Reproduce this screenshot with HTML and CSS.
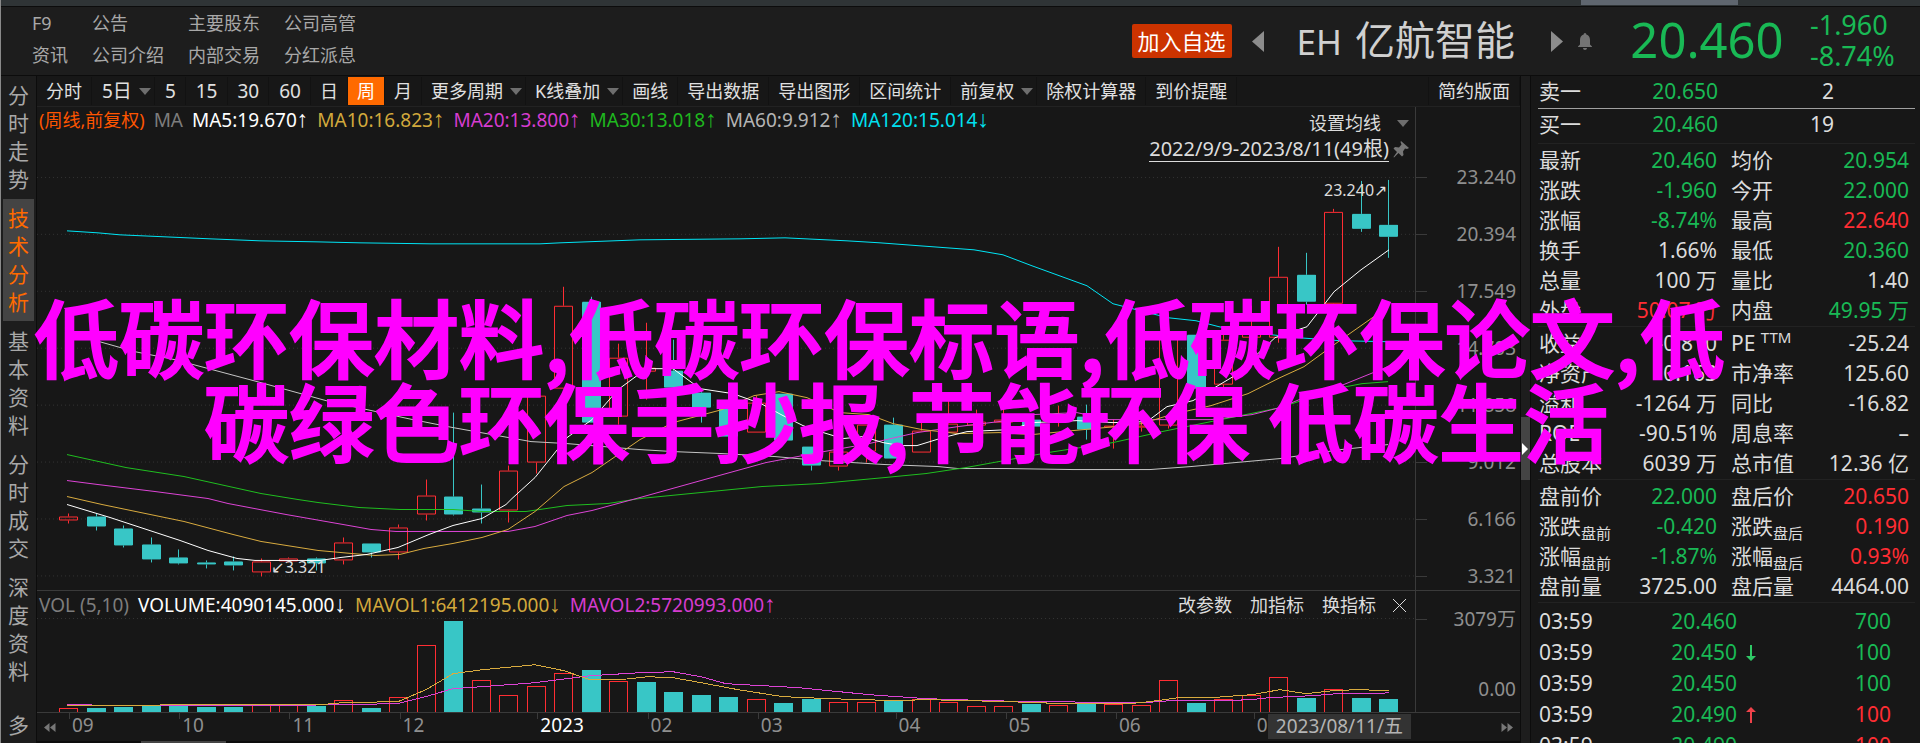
FILE: index.html
```html
<!DOCTYPE html>
<html lang="zh-CN">
<head>
    <meta charset="UTF-8">
    <meta name="viewport" content="width=device-width, initial-scale=1.0">
    <title>EH 亿航智能</title>
    <link rel="stylesheet" href="styles.css">
</head>
<body>
<div class="tab-strip"><span class="tab-current"></span></div>

<header class="header">
    <nav class="header-menu">
        <a href="#">F9</a><a href="#">公告</a><a href="#">主要股东</a><a href="#">公司高管</a>
        <a href="#">资讯</a><a href="#">公司介绍</a><a href="#">内部交易</a><a href="#">分红派息</a>
    </nav>
    <div class="stock">
        <button type="button" class="btn-add">加入自选</button>
        <button type="button" class="btn-icon" aria-label="上一只"><svg width="12" height="21" viewBox="0 0 12 21"><path d="M12 0v21L0 10.500z" fill="#8c8c8c"/></svg></button>
        <h1 class="stock-name"><span class="stock-code">EH</span>亿航智能</h1>
        <button type="button" class="btn-icon" aria-label="下一只"><svg width="12" height="21" viewBox="0 0 12 21"><path d="M0 0v21l12-10.500z" fill="#8c8c8c"/></svg></button>
        <button type="button" class="btn-icon btn-bell" aria-label="提醒"><svg width="14" height="17" viewBox="0 0 14 17"><path d="M7 0c1 0 1.300.8 1.300 1.500C10.800 2.200 12 4.300 12 7v4.500l2 2V14H0v-.5l2-2V7c0-2.700 1.200-4.800 3.700-5.500C5.700.8 6 0 7 0zM5 15h4c0 1.200-.9 2-2 2s-2-.8-2-2z" fill="#747474"/></svg></button>
    </div>
    <div class="last-price green">20.460</div>
    <div class="last-change green"><span>-1.960</span><span>-8.74%</span></div>
</header>

<div class="workspace">
    <nav class="sidebar">
        <a href="#">分时走势</a>
        <a href="#" class="active">技术分析</a>
        <a href="#">基本资料</a>
        <a href="#">分时成交</a>
        <a href="#">深度资料</a>
        <a href="#" class="more">多</a>
    </nav>

    <main class="main">
        <div class="toolbar">
            <button type="button">分时</button>
            <button type="button" class="num drop">5日</button>
            <button type="button" class="num">5</button>
            <button type="button" class="num">15</button>
            <button type="button" class="num">30</button>
            <button type="button" class="num">60</button>
            <button type="button">日</button>
            <button type="button" class="active">周</button>
            <button type="button">月</button>
            <button type="button" class="drop">更多周期</button>
            <button type="button" class="drop">K线叠加</button>
            <button type="button">画线</button>
            <button type="button">导出数据</button>
            <button type="button">导出图形</button>
            <button type="button">区间统计</button>
            <button type="button" class="drop">前复权</button>
            <button type="button">除权计算器</button>
            <button type="button">到价提醒</button>
            <button type="button" class="layout-btn">简约版面</button>
        </div>

        <section class="pane price-pane">
            <div class="plot">
                <svg id="priceChart" class="chart" viewBox="37 107 1378 484" preserveAspectRatio="none"></svg>
                <div class="legend">
                    <span class="c-orange">(周线,前复权)</span>
                    <span class="c-dim">MA</span>
                    <span class="c-white">MA5:19.670<i>↑</i></span>
                    <span class="c-yellow">MA10:16.823<i>↑</i></span>
                    <span class="c-magenta">MA20:13.800<i>↑</i></span>
                    <span class="c-green">MA30:13.018<i>↑</i></span>
                    <span class="c-gray">MA60:9.912<i>↑</i></span>
                    <span class="c-cyan">MA120:15.014<i>↓</i></span>
                </div>
                <div class="range-box">
                    <button type="button" class="drop">设置均线</button>
                    <div class="range">
                        <a href="#">2022/9/9-2023/8/11(49根)</a>
                        <svg width="16" height="17" viewBox="0 0 16 17"><path d="M8 0l8 7-2 1-2-.5-2 3 .5 3.500-1.500 1.500-3.500-3.500L1 16.500.500 16l3.500-5L.5 7.500 2 6l4 .5 2.500-3L7.500 1z" fill="#777"/></svg>
                    </div>
                </div>
                <span class="mark mark-high">23.240<i>↗</i></span>
                <span class="mark mark-low"><i>↙</i>3.321</span>
            </div>
            <div class="axis price-axis">
                <span>23.240</span><span>20.394</span><span>17.549</span><span>14.703</span>
                <span>11.858</span><span>9.012</span><span>6.166</span><span>3.321</span>
            </div>
        </section>

        <section class="pane volume-pane">
            <div class="plot">
                <svg id="volumeChart" class="chart" viewBox="37 592 1378 121" preserveAspectRatio="none"></svg>
                <div class="legend">
                    <span class="c-dim">VOL (5,10)</span>
                    <span class="c-white">VOLUME:4090145.000<i>↓</i></span>
                    <span class="c-yellow">MAVOL1:6412195.000<i>↓</i></span>
                    <span class="c-magenta">MAVOL2:5720993.000<i>↑</i></span>
                </div>
                <div class="indicator-tools">
                    <button type="button">改参数</button>
                    <button type="button">加指标</button>
                    <button type="button">换指标</button>
                    <button type="button" class="close" aria-label="关闭"><svg width="15" height="15" viewBox="0 0 15 15"><path d="M1 1l13 13M14 1L1 14" stroke="#ddd" fill="none"/></svg></button>
                </div>
            </div>
            <div class="axis volume-axis"><span>3079万</span><span>0.00</span></div>
        </section>

        <div class="time-axis">
            <button type="button" class="scroll-btn" aria-label="向左"><svg width="12" height="9" viewBox="0 0 12 9"><path d="M5.500 0v9L0 4.500zM11.500 0v9L6 4.500z" fill="#777"/></svg></button>
            <div class="months">
                <span>09</span><span>10</span><span>11</span><span>12</span><span class="year">2023</span>
                <span>02</span><span>03</span><span>04</span><span>05</span><span>06</span><span>07</span>
                <span class="date-tag">2023/08/11/五</span>
            </div>
            <button type="button" class="scroll-btn scroll-right" aria-label="向右"><svg width="12" height="9" viewBox="0 0 12 9"><path d="M.5 0v9L6 4.500zM6.500 0v9L12 4.500z" fill="#777"/></svg></button>
        </div>
        <div class="bottom-scroll"><span></span></div>
    </main>

    <div class="splitter"><button type="button" aria-label="收起"><svg width="6" height="12" viewBox="0 0 6 12"><path d="M0 0v12l6-6z" fill="#fff"/></svg></button></div>

    <aside class="quote">
        <table class="orders">
            <tr><th>卖一</th><td class="green">20.650</td><td class="qty">2</td></tr>
            <tr><th>买一</th><td class="green">20.460</td><td class="qty">19</td></tr>
        </table>
        <table class="facts">
            <tr><th>最新</th><td class="green">20.460</td><th>均价</th><td class="green">20.954</td></tr>
            <tr><th>涨跌</th><td class="green">-1.960</td><th>今开</th><td class="green">22.000</td></tr>
            <tr><th>涨幅</th><td class="green">-8.74%</td><th>最高</th><td class="red">22.640</td></tr>
            <tr><th>换手</th><td>1.66%</td><th>最低</th><td class="green">20.360</td></tr>
            <tr><th>总量</th><td>100 万</td><th>量比</th><td>1.40</td></tr>
            <tr><th>外盘</th><td class="red">50.07 万</td><th>内盘</th><td class="green">49.95 万</td></tr>
        </table>
        <table class="facts">
            <tr><th>收益</th><td>-0.810</td><th>PE <sup>TTM</sup></th><td>-25.24</td></tr>
            <tr><th>净资产</th><td>0.163</td><th>市净率</th><td>125.60</td></tr>
            <tr><th>溢利</th><td>-1264 万</td><th>同比</th><td>-16.82</td></tr>
            <tr><th>ROE</th><td>-90.51%</td><th>周息率</th><td>–</td></tr>
            <tr><th>总股本</th><td>6039 万</td><th>总市值</th><td>12.36 亿</td></tr>
        </table>
        <table class="facts">
            <tr><th>盘前价</th><td class="green">22.000</td><th>盘后价</th><td class="red">20.650</td></tr>
            <tr><th>涨跌<sub>盘前</sub></th><td class="green">-0.420</td><th>涨跌<sub>盘后</sub></th><td class="red">0.190</td></tr>
            <tr><th>涨幅<sub>盘前</sub></th><td class="green">-1.87%</td><th>涨幅<sub>盘后</sub></th><td class="red">0.93%</td></tr>
            <tr><th>盘前量</th><td>3725.00</td><th>盘后量</th><td>4464.00</td></tr>
        </table>
        <table class="ticks">
            <tr><th>03:59</th><td class="green">20.460</td><td class="dir"></td><td class="green vol">700</td></tr>
            <tr><th>03:59</th><td class="green">20.450</td><td class="dir"><svg width="10" height="16" viewBox="0 0 10 16"><path d="M4 0h2v11h4l-5 5-5-5h4z" fill="#2fc866"/></svg></td><td class="green vol">100</td></tr>
            <tr><th>03:59</th><td class="green">20.450</td><td class="dir"></td><td class="green vol">100</td></tr>
            <tr><th>03:59</th><td class="green">20.490</td><td class="dir"><svg width="10" height="16" viewBox="0 0 10 16"><path d="M4 16h2V5h4L5 0 0 5h4z" fill="#f0424a"/></svg></td><td class="red vol">100</td></tr>
            <tr><th>03:59</th><td class="green">20.490</td><td class="dir"></td><td class="red vol">100</td></tr>
        </table>
    </aside>
</div>

<div class="caption">
    <div>低碳环保材料,低碳环保标语,低碳环保论文,低</div>
    <div class="caption-next">碳绿色环保手抄报,节能环保 低碳生活</div>
</div>
<script src="chart.js"></script>
</body>
</html>
```
FILE: styles.css
```css
* {
    box-sizing: border-box;
}
body {
    margin: 0;
    height: 100vh;
    display: flex;
    flex-direction: column;
    overflow: hidden;
    position: relative;
    background-color: #1d1d1d;
    color: #dcdcdc;
    font-family: "Noto Sans", "Noto Sans CJK SC", sans-serif;
    font-size: 18px;
    border-left: 1px solid #8a8a8a;
}
a {
    color: inherit;
    text-decoration: none;
}
button {
    background: none;
    border: none;
    margin: 0;
    padding: 0;
    color: inherit;
    font: inherit;
    cursor: pointer;
    white-space: nowrap;
}
svg {
    display: block;
}
i {
    font-style: normal;
    font-family: "Liberation Sans", "DejaVu Sans", sans-serif;
}
.green { color: #19b955; }
.red { color: #ff2d33; }
.c-white { color: #fff; }
.c-orange { color: #ff5500; }
.c-dim { color: #7d7d7d; }
.c-yellow { color: #d2a93c; }
.c-magenta { color: #d63cd0; }
.c-green { color: #1fb81f; }
.c-gray { color: #b4b4b4; }
.c-cyan { color: #00e0f0; }

/* top */
.tab-strip {
    flex: none;
    height: 7px;
    display: flex;
    justify-content: flex-end;
    padding-right: 182px;
    background-color: #2f3436;
    border-bottom: 1px solid #0c0c0c;
}
.tab-current {
    width: 157px;
    height: 5px;
    background-color: #5f666f;
}
.header {
    flex: none;
    height: 69px;
    display: flex;
    align-items: center;
    padding: 0 24px 0 31px;
    border-bottom: 1px solid #0c0c0c;
}
.header-menu {
    display: grid;
    grid-template-columns: repeat(4, auto);
    column-gap: 24px;
    line-height: 32px;
    padding-bottom: 4px;
    color: #a8a8a8;
}
.stock {
    margin-left: auto;
    display: flex;
    align-items: center;
}
.btn-add {
    height: 34px;
    padding: 0 6px;
    margin-right: 20px;
    background-color: #cc3300;
    border-radius: 2px;
    color: #fff;
    font-size: 22px;
    line-height: 32px;
}
.btn-icon {
    flex: none;
}
.stock-name {
    margin: 0 36px 0 33px;
    font-size: 40px;
    font-weight: normal;
    line-height: 60px;
    color: #d0d0d0;
    white-space: nowrap;
}
.stock-code {
    font-size: 35px;
    margin-right: 13px;
}
.btn-bell {
    margin-left: 15px;
}
.last-price {
    width: 230px;
    text-align: center;
    font-size: 49px;
    line-height: 64px;
    padding-bottom: 4px;
}
.last-change {
    width: 86px;
    margin-left: -12px;
    font-size: 27px;
    line-height: 31px;
    padding-bottom: 2px;
}
.last-change span {
    display: block;
}

/* workspace */
.workspace {
    flex: 1;
    min-height: 0;
    display: flex;
}
.sidebar {
    flex: none;
    width: 36px;
    display: flex;
    flex-direction: column;
    gap: 1px;
    padding-left: 2px;
    border-right: 1px solid #0c0c0c;
    overflow: hidden;
    color: #a8a8a8;
    font-size: 21px;
    line-height: 28px;
}
.sidebar a {
    flex: none;
    width: 31px;
    padding: 5px;
    word-break: break-all;
}
.sidebar .active {
    background-color: #444;
    color: #ff6a00;
}
.sidebar .more {
    padding-top: 20px;
}
.main {
    flex: 1;
    min-width: 0;
    display: flex;
    flex-direction: column;
    background-color: #171717;
    border-right: 1px solid #0c0c0c;
}
.toolbar {
    flex: none;
    display: flex;
    height: 31px;
    padding: 1px 0;
    border-bottom: 1px solid #222;
    color: #e0e0e0;
}
.toolbar button {
    padding: 0 9px;
    border-right: 1px solid #121212;
    line-height: 28px;
}
.toolbar .num {
    padding-left: 10px;
    font-size: 19px;
    line-height: 26px;
}
.toolbar .active {
    background-color: #ff6a00;
    color: #fff;
}
.toolbar .layout-btn {
    margin-left: auto;
    border-left: 1px solid #121212;
}
.drop::after {
    content: "";
    display: inline-block;
    margin-left: 7px;
    vertical-align: 3px;
    border: 6px solid transparent;
    border-top: 7px solid #6e6e6e;
    border-bottom: 0;
}
.toolbar .drop {
    padding-right: 3px;
}

/* charts */
.pane {
    display: flex;
    min-height: 0;
    border-bottom: 1px solid #3a3a3a;
}
.price-pane {
    flex: 485;
}
.volume-pane {
    flex: 121;
}
.plot {
    flex: 1;
    min-width: 0;
    position: relative;
    border-right: 1px solid #3a3a3a;
}
.chart {
    position: absolute;
    width: 100%;
    height: 100%;
}
.chart * {
    vector-effect: non-scaling-stroke;
    shape-rendering: crispEdges;
    fill: none;
}
.chart .grid { stroke: #333; stroke-dasharray: 1 3; }
.chart .up { stroke: #ff2d33; }
.chart .down { stroke: #38c6c6; }
.chart rect.down { fill: #38c6c6; }
.chart .ma5 { stroke: #fff; }
.chart .ma10 { stroke: #d9ab3f; }
.chart .ma20 { stroke: #dd44d6; }
.chart .ma30 { stroke: #1fbe1f; }
.chart .ma60 { stroke: #c4c4c4; }
.chart .ma120 { stroke: #00e5f5; }
.legend {
    position: relative;
    display: flex;
    gap: 9px;
    padding-left: 2px;
    font-size: 19px;
    line-height: 26px;
    white-space: nowrap;
}
.legend span:first-child {
    font-size: 18px;
}
.legend i {
    font-size: 23px;
    line-height: 1px;
}
.range-box {
    position: absolute;
    top: 4px;
    right: 6px;
    display: flex;
    flex-direction: column;
    align-items: flex-end;
    line-height: 25px;
}
.range-box .drop::after {
    margin-left: 16px;
}
.range {
    display: flex;
    align-items: center;
    gap: 4px;
    font-size: 20px;
}
.range a {
    border-bottom: 1px solid #dcdcdc;
    line-height: 25px;
}
.mark {
    position: absolute;
    font-size: 16px;
    line-height: 20px;
}
.mark-high {
    top: 15%;
    right: 2%;
}
.mark-low {
    top: 93%;
    left: 17%;
}
.axis {
    flex: none;
    width: 104px;
    padding-right: 4px;
    display: flex;
    flex-direction: column;
    text-align: right;
    color: #8f8f8f;
    font-size: 19px;
}
.axis span {
    background: linear-gradient(#3a3a3a, #3a3a3a) left center / 11px 1px no-repeat;
}
.price-axis {
    padding-top: 42px;
    line-height: 57px;
}
.volume-axis {
    padding-top: 14px;
    gap: 42px;
    line-height: 28px;
}
.volume-axis span:last-child {
    background: none;
}
.volume-pane .legend {
    padding-top: 1px;
}
.volume-pane .legend span:first-child {
    font-size: 19px;
}
.indicator-tools {
    position: absolute;
    top: 0;
    right: 8px;
    display: flex;
    gap: 18px;
    line-height: 28px;
}
.indicator-tools .close {
    margin-left: -2px;
}
.time-axis {
    flex: none;
    height: 28px;
    display: flex;
    font-size: 19px;
    line-height: 25px;
    color: #8f8f8f;
}
.scroll-btn {
    width: 32px;
    padding: 0 7px;
}
.scroll-right {
    width: 101px;
    display: flex;
    justify-content: flex-end;
    align-items: center;
}
.months {
    flex: 1;
    position: relative;
    display: grid;
    grid-template-columns: 4fr 4fr 4fr 5fr 4fr 4fr 5fr 4fr 4fr 5fr 6fr;
}
.months span {
    padding-left: 3px;
    background: linear-gradient(#3a3a3a, #3a3a3a) left top / 1px 6px no-repeat;
}
.months .year {
    color: #fff;
}
.months .date-tag {
    position: absolute;
    top: 1px;
    right: 8px;
    height: 25px;
    padding: 0 8px;
    background: #333;
    color: #b4b4b4;
}
.bottom-scroll {
    flex: none;
    height: 2px;
    padding-left: 104px;
    background-color: #0c0c0c;
}
.bottom-scroll span {
    display: block;
    width: 85px;
    height: 2px;
    background-color: #444;
}

/* right side */
.splitter {
    flex: none;
    width: 9px;
    padding-top: 341px;
}
.splitter button {
    width: 9px;
    height: 63px;
    padding-left: 1px;
    background-color: #444;
}
.quote {
    flex: none;
    width: 390px;
    padding: 0 5px 0 7px;
    overflow: hidden;
    background-color: #171717;
    border-left: 1px solid #0c0c0c;
    font-size: 21px;
}
.quote table {
    width: 100%;
    table-layout: fixed;
    border-collapse: separate;
    border-spacing: 0;
    border-bottom: 1px solid #222;
}
.quote th {
    padding: 0 0 0 1px;
    text-align: left;
    font-weight: normal;
    white-space: nowrap;
}
.quote td {
    padding: 0;
    text-align: right;
    white-space: nowrap;
}
.quote .orders th,
.quote .orders td {
    height: 34px;
    line-height: 31px;
    padding-bottom: 3px;
}
.quote .orders tr:first-child th,
.quote .orders tr:first-child td {
    height: 33px;
    padding-bottom: 1px;
    border-bottom: 1px solid #a0a0a0;
}
.orders th { width: 70px; }
.orders td { width: 110px; }
.quote .orders .qty {
    width: auto;
    padding-right: 81px;
}
.quote .facts {
    padding: 1px 0;
}
.facts th,
.facts td {
    height: 30px;
    line-height: 30px;
}
.facts th { width: 72px; }
.facts td { width: 107px; }
.facts th + td + th {
    width: 89px;
}
.quote .facts th + td + th {
    padding-left: 14px;
}
.quote .facts td:last-child {
    width: auto;
    padding-right: 6px;
}
.facts sup,
.facts sub {
    font-size: 15px;
    line-height: 1px;
}
.quote .ticks {
    padding-top: 3px;
    border: none;
}
.ticks th,
.ticks td {
    height: 31px;
    line-height: 31px;
}
.ticks th { width: 90px; }
.ticks td { width: 109px; }
.ticks .dir {
    width: 28px;
}
.ticks .dir svg {
    margin-left: 9px;
}
.quote .ticks .vol {
    width: auto;
    padding-right: 24px;
}

/* caption lying over the page */
.caption {
    position: absolute;
    top: 293px;
    left: 33px;
    color: #f0f;
    font-family: "Noto Sans CJK SC", sans-serif;
    font-size: 85px;
    font-weight: 500;
    line-height: 84px;
    white-space: nowrap;
    -webkit-text-stroke: 2px #f0f;
    text-shadow: 0 0 1px #a010a0;
    pointer-events: none;
}
.caption-next {
    padding-left: 2em;
}
```
FILE: chart.js
```js
const SVG_NS = 'http://www.w3.org/2000/svg';
const FIRST_X = 69;
const STEP = 27.5;
const BASE_Y = 712;

// [u = up / d = down, body top, body bottom, high, low]
const candles = [
    ['u', 517, 521, 514, 524], ['d', 517, 527, 514, 531], ['d', 529, 546, 526, 548], ['d', 545, 560, 538, 563],
    ['d', 558, 564, 550, 565], ['d', 563, 565, 561, 569], ['d', 562, 566, 557, 571], ['u', 562, 573, 559, 577],
    ['u', 559, 562, 558, 563], ['d', 559, 564, 558, 571], ['u', 543, 561, 538, 565], ['d', 544, 553, 544, 558],
    ['u', 528, 553, 525, 560], ['u', 496, 515, 480, 521], ['d', 497, 515, 413, 516], ['d', 509, 513, 485, 524],
    ['u', 471, 511, 466, 523], ['u', 396, 463, 390, 474], ['u', 306, 389, 287, 389], ['d', 302, 423, 297, 423],
    ['u', 358, 417, 344, 425], ['u', 368, 372, 323, 400], ['d', 371, 388, 340, 399], ['d', 393, 408, 390, 423],
    ['d', 407, 437, 400, 437], ['u', 403, 433, 396, 433], ['d', 394, 441, 394, 442], ['d', 447, 466, 447, 471],
    ['u', 452, 467, 445, 471], ['u', 425, 452, 425, 463], ['d', 425, 459, 418, 459], ['u', 431, 453, 422, 453],
    ['u', 424, 433, 401, 433], ['u', 422, 426, 410, 426], ['u', 420, 423, 409, 423], ['d', 420, 427, 416, 454],
    ['u', 418, 420, 406, 427], ['d', 417, 430, 405, 440], ['u', 426, 428, 420, 449], ['u', 426, 428, 420, 432],
    ['u', 338, 426, 314, 429], ['d', 335, 389, 335, 389], ['u', 340, 385, 332, 388], ['u', 332, 338, 306, 338],
    ['u', 277, 338, 247, 343], ['d', 275, 302, 253, 305], ['u', 212, 304, 209, 318], ['d', 214, 229, 181, 232],
    ['d', 225, 237, 180, 258]
];

const volumes = [
    ['u', 709], ['d', 709], ['d', 708], ['d', 707], ['d', 706], ['d', 708], ['d', 708], ['u', 705], ['u', 706],
    ['d', 707], ['u', 701], ['d', 709], ['u', 698], ['u', 646], ['d', 622], ['u', 681], ['u', 696], ['u', 687],
    ['u', 674], ['d', 671], ['u', 682], ['d', 683], ['d', 693], ['d', 696], ['d', 698], ['u', 700], ['d', 704],
    ['d', 700], ['u', 703], ['u', 703], ['d', 702], ['u', 700], ['u', 703], ['u', 707], ['u', 707], ['d', 705],
    ['u', 706], ['d', 705], ['u', 705], ['u', 706], ['u', 681], ['d', 704], ['u', 700], ['u', 696], ['u', 678],
    ['d', 699], ['u', 690], ['d', 699], ['d', 700]
];

const priceLines = {
    ma120: '67,231 98,233 120,235 165,237 210,239 260,241 316,242 360,243 430,244 540,244 560,243 640,240 740,239 785,238 847,241 880,243 920,246 974,250 1003,255 1032,266 1087,286 1113,304 1168,318 1196,321 1219,327 1246,332 1280,336 1298,338 1340,341 1388,342',
    ma60: '67,334 89,339 135,352 175,360 261,383 326,401 408,419 453,428 531,442 567,444 640,450 673,452 722,454 775,457 820,461 885,465 938,467 958,469 1007,469 1073,470 1150,470 1191,467 1280,459 1341,450 1388,445',
    ma30: '67,455 126,468 184,477 261,494 298,500 318,503 359,508 400,510 453,510 482,512 526,512 567,506 608,504 640,499 701,493 762,487 820,484 885,478 926,474 966,468 999,462 1048,453 1113,443 1162,432 1211,422 1280,408 1341,388 1362,384 1388,382',
    ma20: '67,481 98,485 155,492 208,499 228,504 286,515 343,525 371,530 396,532 508,532 535,527 567,516 592,511 640,498 701,481 766,463 824,452 869,444 917,433 958,427 1007,421 1032,415 1077,413 1109,420 1211,420 1252,415 1280,408 1304,398 1341,386 1378,371 1388,367',
    ma10: '67,497 102,505 184,522 233,535 261,542 318,551 351,554 375,556 400,555 424,549 453,544 482,538 508,530 535,512 557,493 564,487 592,473 640,440 673,423 722,410 754,396 779,392 807,398 840,413 869,415 893,424 922,430 958,434 999,433 1032,435 1073,431 1105,428 1142,424 1171,415 1211,406 1248,394 1280,378 1304,367 1341,340 1388,307',
    ma5: '67,505 110,518 180,541 208,551 237,559 255,561 320,561 341,558 367,555 398,548 429,535 453,526 482,519 506,505 512,499 535,478 567,438 592,420 618,390 637,376 648,369 673,369 700,389 733,394 747,399 761,404 783,416 803,426 820,432 843,439 863,437 883,443 900,446 917,446 943,438 967,432 1010,430 1033,423 1077,421 1113,423 1147,422 1167,407 1193,401 1233,377 1275,338 1295,331 1307,327 1334,292 1361,270 1389,250'
};

const volumeLines = {
    ma20: '67,706 130,707 275,707 343,706 398,705 429,697 453,690 482,688 535,684 590,677 640,674 673,673 701,678 726,685 799,689 869,696 926,700 987,702 1032,703 1145,704 1171,702 1224,702 1252,701 1269,699 1313,697 1337,695 1378,695 1389,694',
    ma10: '67,707 220,706 322,706 343,704 398,703 426,691 453,675 482,671 535,666 564,672 590,681 620,681 648,678 673,679 701,684 738,691 783,698 828,700 897,702 926,701 1007,703 1064,705 1130,705 1150,703 1179,699 1211,699 1252,696 1280,691 1306,695 1333,692 1358,691 1389,692'
};

function add(parent, tag, attrs) {
    const el = document.createElementNS(SVG_NS, tag);
    Object.keys(attrs).forEach(key => el.setAttribute(key, attrs[key]));
    parent.appendChild(el);
}

function drawGrid(svg, rows) {
    rows.forEach(y => add(svg, 'line', { x1: 37, x2: 1415, y1: y + 0.5, y2: y + 0.5, class: 'grid' }));
}

function drawLines(svg, lines) {
    Object.keys(lines).forEach(name => add(svg, 'polyline', { points: lines[name], class: name }));
}

function drawBar(svg, x, top, bottom, cls) {
    add(svg, 'rect', { x: x - 9, y: top + 0.5, width: 18, height: Math.max(bottom - top - 1, 1), class: cls });
}

const price = document.getElementById('priceChart');
drawGrid(price, [177, 234, 291, 348, 405, 462, 519, 576]);
candles.forEach(([type, top, bottom, high, low], i) => {
    const x = Math.round(FIRST_X + STEP * i) - 0.5;
    const cls = type === 'u' ? 'up' : 'down';
    add(price, 'line', { x1: x, x2: x, y1: high, y2: top, class: cls });
    add(price, 'line', { x1: x, x2: x, y1: bottom, y2: low, class: cls });
    drawBar(price, x, top, bottom, cls);
});
drawLines(price, priceLines);

const volume = document.getElementById('volumeChart');
drawGrid(volume, [619]);
volumes.forEach(([type, top], i) => {
    const x = Math.round(FIRST_X + STEP * i) - 0.5;
    drawBar(volume, x, top, BASE_Y + 2, type === 'u' ? 'up' : 'down');
});
drawLines(volume, volumeLines);
```
